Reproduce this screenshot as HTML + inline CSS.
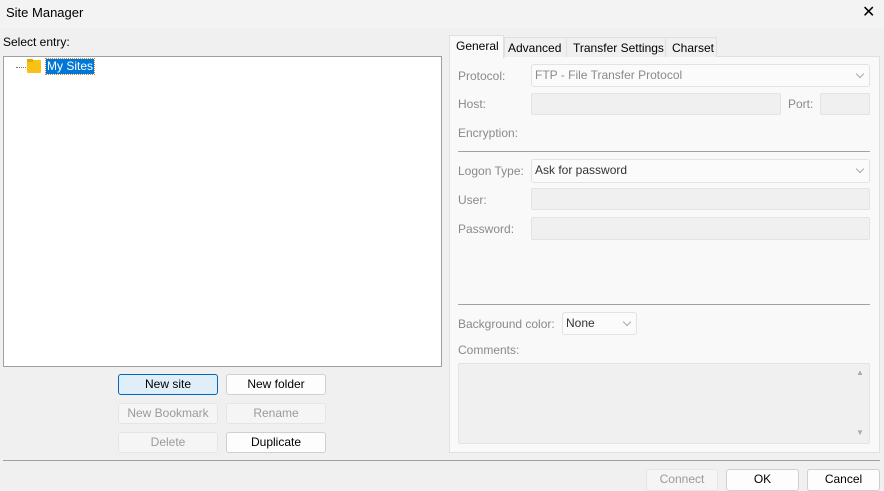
<!DOCTYPE html>
<html><head><style>
body{margin:0;width:884px;height:489px;background:#f0f0f0;font-family:"Liberation Sans",sans-serif;font-size:12px;color:#000;position:relative;overflow:hidden}
.a{position:absolute}
.t{position:absolute;white-space:nowrap}
.g{color:#8a8a8a}
.inp{position:absolute;background:#f0f0f0;border:1px solid #e3e3e3;box-sizing:border-box;border-radius:2px}
.cmb{position:absolute;background:#fbfbfb;border:1px solid #e3e3e3;box-sizing:border-box;border-radius:3px;color:#8a8a8a;padding:3px 0 0 3px}
.btn{position:absolute;box-sizing:border-box;border:1px solid #d0d0d0;border-radius:3px;background:#fdfdfd;text-align:center;line-height:19px;font-size:12px}
.dis{background:#f5f5f5;border-color:#e5e5e5;color:#9a9a9a}
.chev{position:absolute;right:6px;top:6px;width:5px;height:5px;border-right:1px solid #aaa;border-bottom:1px solid #aaa;transform:rotate(45deg)}
</style></head><body>
<div class="a" style="left:0;top:0;width:884px;height:28px;background:#f3f3f3"></div>
<div class="t" style="left:6px;top:5px;font-size:13px">Site Manager</div>
<div class="t" style="left:862px;top:2px;font-size:16px">✕</div>

<div class="t" style="left:3px;top:35px">Select entry:</div>
<div class="a" style="left:3px;top:56px;width:439px;height:311px;background:#fff;border:1px solid #a0a0a0;box-sizing:border-box"></div>
<div class="a" style="left:16px;top:67px;width:10px;border-top:1px dotted #777"></div>
<div class="a" style="left:27px;top:60px;width:14px;height:13px;background:#f8c116;border-radius:1px"></div>
<div class="a" style="left:27px;top:59px;width:6px;height:3px;background:#e6a800"></div>
<div class="t" style="left:46px;top:59px;background:#0078d7;color:#fff;outline:1px dotted #c08040;padding:0 1px;line-height:15px">My Sites</div>

<div class="btn" style="left:118px;top:374px;width:100px;height:21px;background:#e0eef9;border-color:#0067c0">New site</div>
<div class="btn" style="left:226px;top:374px;width:100px;height:21px">New folder</div>
<div class="btn dis" style="left:118px;top:403px;width:100px;height:21px">New Bookmark</div>
<div class="btn dis" style="left:226px;top:403px;width:100px;height:21px">Rename</div>
<div class="btn dis" style="left:118px;top:432px;width:100px;height:21px">Delete</div>
<div class="btn" style="left:226px;top:432px;width:100px;height:21px">Duplicate</div>

<!-- tabs -->
<div class="a" style="left:449px;top:56px;width:431px;height:397px;background:#f9f9f9;border:1px solid #e0e0e0;box-sizing:border-box"></div>
<div class="a" style="left:504px;top:37px;width:62px;height:19px;border:1px solid #e0e0e0;border-bottom:none;background:#f0f0f0"></div>
<div class="a" style="left:566px;top:37px;width:99px;height:19px;border:1px solid #e0e0e0;border-bottom:none;background:#f0f0f0"></div>
<div class="a" style="left:665px;top:37px;width:50px;height:19px;border:1px solid #e0e0e0;border-bottom:none;background:#f0f0f0"></div>
<div class="a" style="left:449px;top:35px;width:55px;height:23px;border:1px solid #e0e0e0;border-bottom:none;background:#f9f9f9;box-sizing:border-box"></div>
<div class="t" style="left:456px;top:39px">General</div>
<div class="t" style="left:508px;top:41px">Advanced</div>
<div class="t" style="left:573px;top:41px">Transfer Settings</div>
<div class="t" style="left:672px;top:41px">Charset</div>

<div class="t g" style="left:458px;top:69px">Protocol:</div>
<div class="cmb" style="left:531px;top:64px;width:339px;height:23px">FTP - File Transfer Protocol<div class="chev"></div></div>
<div class="t g" style="left:458px;top:97px">Host:</div>
<div class="inp" style="left:531px;top:93px;width:250px;height:22px"></div>
<div class="t g" style="left:788px;top:97px">Port:</div>
<div class="inp" style="left:820px;top:93px;width:50px;height:22px"></div>
<div class="t g" style="left:458px;top:126px">Encryption:</div>
<div class="a" style="left:458px;top:151px;width:412px;border-top:1px solid #a0a0a0"></div>
<div class="t g" style="left:458px;top:164px">Logon Type:</div>
<div class="cmb" style="left:531px;top:159px;width:339px;height:24px;color:#333">Ask for password<div class="chev"></div></div>
<div class="t g" style="left:458px;top:193px">User:</div>
<div class="inp" style="left:531px;top:188px;width:339px;height:22px"></div>
<div class="t g" style="left:458px;top:222px">Password:</div>
<div class="inp" style="left:531px;top:217px;width:339px;height:23px"></div>
<div class="a" style="left:458px;top:304px;width:412px;border-top:1px solid #a0a0a0"></div>
<div class="t g" style="left:458px;top:317px">Background color:</div>
<div class="cmb" style="left:562px;top:312px;width:75px;height:23px;color:#333">None<div class="chev"></div></div>
<div class="t g" style="left:458px;top:343px">Comments:</div>
<div class="inp" style="left:458px;top:363px;width:412px;height:81px"></div>
<div class="t" style="left:856px;top:368px;font-size:8px;color:#aaa">▲</div>
<div class="t" style="left:856px;top:428px;font-size:8px;color:#aaa">▼</div>

<div class="a" style="left:3px;top:460px;width:877px;border-top:1px solid #a0a0a0"></div>
<div class="btn dis" style="left:646px;top:469px;width:72px;height:22px">Connect</div>
<div class="btn" style="left:726px;top:469px;width:73px;height:22px">OK</div>
<div class="btn" style="left:807px;top:469px;width:73px;height:22px">Cancel</div>
</body></html>
